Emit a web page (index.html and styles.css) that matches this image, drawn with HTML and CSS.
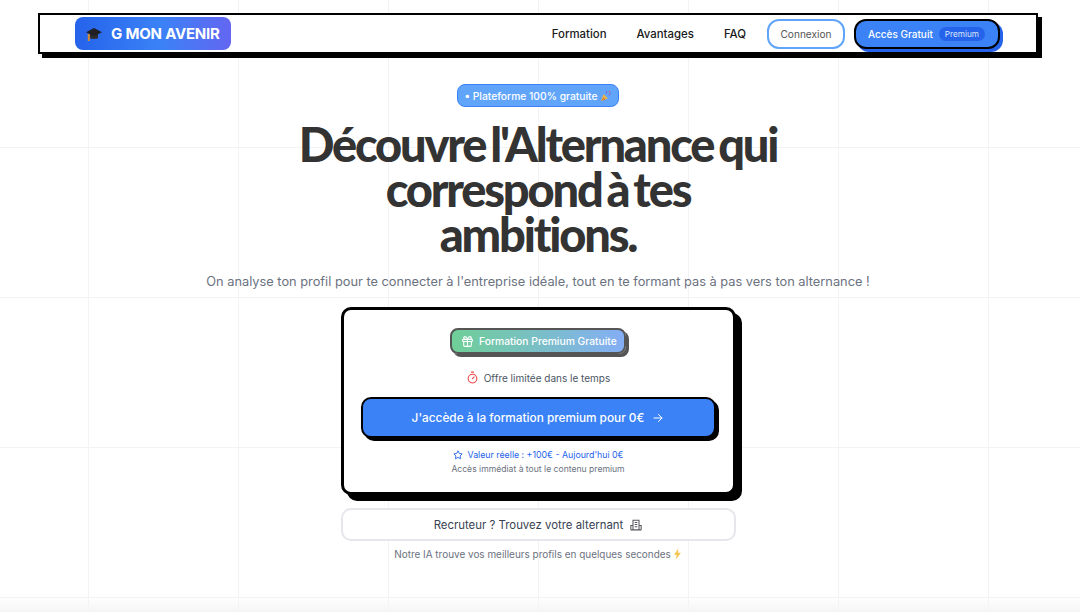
FILE: index.html
```html
<!DOCTYPE html>
<html lang="fr">
<head>
    <meta charset="UTF-8">
    <meta name="viewport" content="width=device-width, initial-scale=1.0">
    <title>G Mon Avenir</title>
    <link rel="stylesheet" href="styles.css">
</head>
<body>

    <!-- Barre de navigation -->
    <nav class="navbar">
        <a class="logo" href="#">
            <svg class="logo-cap" viewBox="0 0 18 18" width="18" height="18">
                <path d="M5 8.500v4.500c1 1.200 7 1.200 8 0V8.500z" fill="#2b2b30"/>
                <path d="M9 3 1 7.200l8 4 8-4z" fill="#1f1f24"/>
                <path d="M3.800 9v7" stroke="#d98a2b" stroke-width="2" fill="none"/>
            </svg>
            <span>G MON AVENIR</span>
        </a>
        <div class="nav-links">
            <a href="#">Formation</a>
            <a href="#">Avantages</a>
            <a href="#">FAQ</a>
        </div>
        <a class="btn-login" href="#">Connexion</a>
        <a class="btn-access" href="#">Accès Gratuit <span class="pill">Premium</span></a>
    </nav>

    <main class="hero">
        <div class="badge">
            <span>• Plateforme 100% gratuite</span>
            <svg viewBox="0 0 12 12" width="12" height="12">
                <path d="M1 11 3.500 4 8 8.500z" fill="#e9b44c"/>
                <path d="M3 8 5 9.500M2.200 9.500l1.200 1" stroke="#c9572f" stroke-width="1"/>
                <path d="M6 3.500 7 1M8.500 5 11 3.500" stroke="#8a5fc7" stroke-width="1"/>
                <circle cx="9.500" cy="1.800" r=".8" fill="#e2574c"/>
            </svg>
        </div>

        <h1>Découvre l'Alternance qui<br>correspond à tes<br>ambitions.</h1>

        <p class="subtitle">On analyse ton profil pour te connecter à l'entreprise idéale, tout en te formant pas à pas vers ton alternance !</p>

        <!-- Carte de l'offre -->
        <section class="card">
            <div class="offer-tag">
                <svg viewBox="0 0 24 24" width="13" height="13" fill="none" stroke="#fff" stroke-width="2" stroke-linecap="round" stroke-linejoin="round">
                    <rect x="3" y="8" width="18" height="4" rx="1"/>
                    <path d="M12 8v13M19 12v7a2 2 0 0 1-2 2H7a2 2 0 0 1-2-2v-7"/>
                    <path d="M7.500 8a2.500 2.500 0 0 1 0-5C10 3 12 8 12 8s2-5 4.500-5a2.500 2.500 0 0 1 0 5"/>
                </svg>
                <span>Formation Premium Gratuite</span>
            </div>

            <div class="limited">
                <svg viewBox="0 0 24 24" width="13" height="13" fill="none" stroke="#ef4444" stroke-width="2" stroke-linecap="round" stroke-linejoin="round">
                    <path d="M10 2h4M12 14l3-3"/>
                    <circle cx="12" cy="14" r="8"/>
                </svg>
                <span>Offre limitée dans le temps</span>
            </div>

            <a class="btn-cta" href="#">
                <span>J'accède à la formation premium pour 0€</span>
                <svg viewBox="0 0 24 24" width="12" height="12" fill="none" stroke="#fff" stroke-width="2" stroke-linecap="round" stroke-linejoin="round">
                    <path d="M4 12h16M13 5l7 7-7 7"/>
                </svg>
            </a>

            <div class="value">
                <svg viewBox="0 0 24 24" width="10" height="10" fill="none" stroke="#2563eb" stroke-width="2.200" stroke-linejoin="round">
                    <path d="m12 2 3.100 6.300 6.900 1-5 4.900 1.200 6.900-6.200-3.300-6.200 3.300L7 14.200 2 9.300l6.900-1z"/>
                </svg>
                <span>Valeur réelle : +100€ - Aujourd'hui 0€</span>
            </div>
            <p class="access">Accès immédiat à tout le contenu premium</p>
        </section>

        <a class="btn-recruiter" href="#">
            <span>Recruteur ? Trouvez votre alternant</span>
            <svg viewBox="0 0 14 14" width="12" height="12" fill="none" stroke="#55555c" stroke-width="1.200">
                <path d="M3.500 12.500v-11h7v11M1 12.500v-5h2.500M13 12.500v-5h-2.500M.8 12.700h12.400"/>
                <path d="M5.500 4h3M5.500 6.500h3M5.500 9h3"/>
            </svg>
        </a>

        <p class="note">
            <span>Notre IA trouve vos meilleurs profils en quelques secondes</span>
            <svg viewBox="0 0 10 14" width="9" height="12">
                <path d="M6 .5 1 8h3l-1 5.500L9 5.500H5.500z" fill="#f5c451"/>
            </svg>
        </p>
    </main>

</body>
</html>
```

FILE: styles.css
```css
* {
    margin: 0;
    padding: 0;
    box-sizing: border-box;
}

body {
    font-family: "Inter", "Noto Sans", sans-serif;
    background-color: #ffffff;
    background-image:
        linear-gradient(to top, #f5f5f5, rgba(255, 255, 255, 0) 16px),
        linear-gradient(to right, #f3f3f4 1px, transparent 1px),
        linear-gradient(to bottom, #f3f3f4 1px, transparent 1px);
    background-size: 100% 100%, 150px 150px, 150px 150px;
    background-position: 0 0, 88px 0, 0 147px;
    height: 612px;
    overflow: hidden;
    padding-top: 13px;
}

a {
    text-decoration: none;
    color: inherit;
}

/* Barre de navigation */
.navbar {
    display: flex;
    align-items: center;
    width: 1000px;
    height: 41px;
    margin-left: 38px;
    padding: 0 34px 0 35px;
    background-color: #ffffff;
    border: 2px solid #000000;
    box-shadow: 4px 4px 0 #000000;
}

.logo {
    display: flex;
    align-items: center;
    gap: 8px;
    width: 156px;
    height: 33px;
    padding-left: 10px;
    border-radius: 8px;
    background: linear-gradient(to right, #2563eb, #3b82f6 55%, #6366f1);
    color: #ffffff;
    font-size: 15px;
    font-weight: 700;
    letter-spacing: -0.2px;
    white-space: nowrap;
}

.nav-links {
    display: flex;
    gap: 30px;
    margin-left: auto;
    margin-right: 21px;
    font-size: 11.400px;
    font-weight: 500;
    color: #1a1a1a;
}

.btn-login {
    display: flex;
    align-items: center;
    justify-content: center;
    width: 78px;
    height: 30px;
    margin-right: 9px;
    border: 2px solid #60a5fa;
    border-radius: 12px;
    font-size: 10.100px;
    color: #555;
}

.btn-access {
    display: flex;
    align-items: center;
    gap: 6px;
    width: 146px;
    height: 30px;
    margin-right: 2px;
    padding-left: 12px;
    border: 2px solid #000000;
    border-radius: 12px;
    background-color: #3b82f6;
    box-shadow: 3px 3px 0 #2563eb;
    color: #ffffff;
    font-size: 10px;
    font-weight: 500;
    white-space: nowrap;
}

.pill {
    padding: 2px 6px;
    border-radius: 8px;
    background-color: #2563eb;
    font-size: 8.200px;
    font-weight: 400;
    color: #dbe7fe;
}

/* Contenu principal */
.hero {
    display: flex;
    flex-direction: column;
    align-items: center;
    padding-top: 30px;
    padding-right: 4px;
}

.badge {
    display: flex;
    align-items: center;
    gap: 2px;
    height: 23px;
    width: 162px;
    justify-content: center;
    border: 1px solid #3b82f6;
    border-radius: 8px;
    background-color: #60a5fa;
    color: #ffffff;
    font-size: 10.300px;
    font-weight: 500;
    white-space: nowrap;
}

h1 {
    margin-top: 15px;
    font-family: "Lato", sans-serif;
    font-size: 47px;
    font-weight: 900;
    line-height: 45px;
    letter-spacing: -2.200px;
    word-spacing: -4px;
    text-align: center;
    color: #333333;
}

.subtitle {
    margin-top: 15px;
    font-size: 12.800px;
    line-height: 20px;
    color: #6b7280;
    white-space: nowrap;
}

.card {
    display: flex;
    flex-direction: column;
    align-items: center;
    width: 395px;
    height: 188px;
    margin-top: 15px;
    padding-top: 18px;
    background-color: #ffffff;
    border: 3px solid #000000;
    border-radius: 10px;
    box-shadow: 6px 6px 0 #000000;
}

.offer-tag {
    display: flex;
    align-items: center;
    gap: 5px;
    width: 176px;
    height: 26px;
    padding-left: 9px;
    border: 2px solid #555555;
    border-radius: 8px;
    background: linear-gradient(to right, #6fcf97, #84aef5);
    box-shadow: 3px 3px 0 #555555;
    color: #ffffff;
    font-size: 10.300px;
    font-weight: 500;
    white-space: nowrap;
}

.limited {
    display: flex;
    align-items: center;
    gap: 5px;
    margin-top: 17px;
    font-size: 10px;
    color: #4b5563;
}

.btn-cta {
    display: flex;
    align-items: center;
    justify-content: center;
    gap: 8px;
    width: 355px;
    height: 41px;
    margin-top: 13px;
    border: 2px solid #000000;
    border-radius: 10px;
    background-color: #3b82f6;
    box-shadow: 3px 3px 0 #000000;
    color: #ffffff;
    font-size: 11.800px;
    font-weight: 500;
}

.value {
    display: flex;
    align-items: center;
    gap: 5px;
    margin-top: 11px;
    font-size: 8.800px;
    color: #2563eb;
}

.access {
    margin-top: 4px;
    font-size: 8.600px;
    color: #6b7280;
}

.btn-recruiter {
    display: flex;
    align-items: center;
    justify-content: center;
    gap: 7px;
    width: 395px;
    height: 33px;
    margin-top: 13px;
    border: 2px solid #e5e7eb;
    border-radius: 10px;
    background-color: #ffffff;
    font-size: 11.400px;
    color: #374151;
}

.note {
    display: flex;
    align-items: center;
    gap: 2px;
    margin-top: 6px;
    font-size: 9.950px;
    line-height: 14px;
    color: #6b7280;
}
```
